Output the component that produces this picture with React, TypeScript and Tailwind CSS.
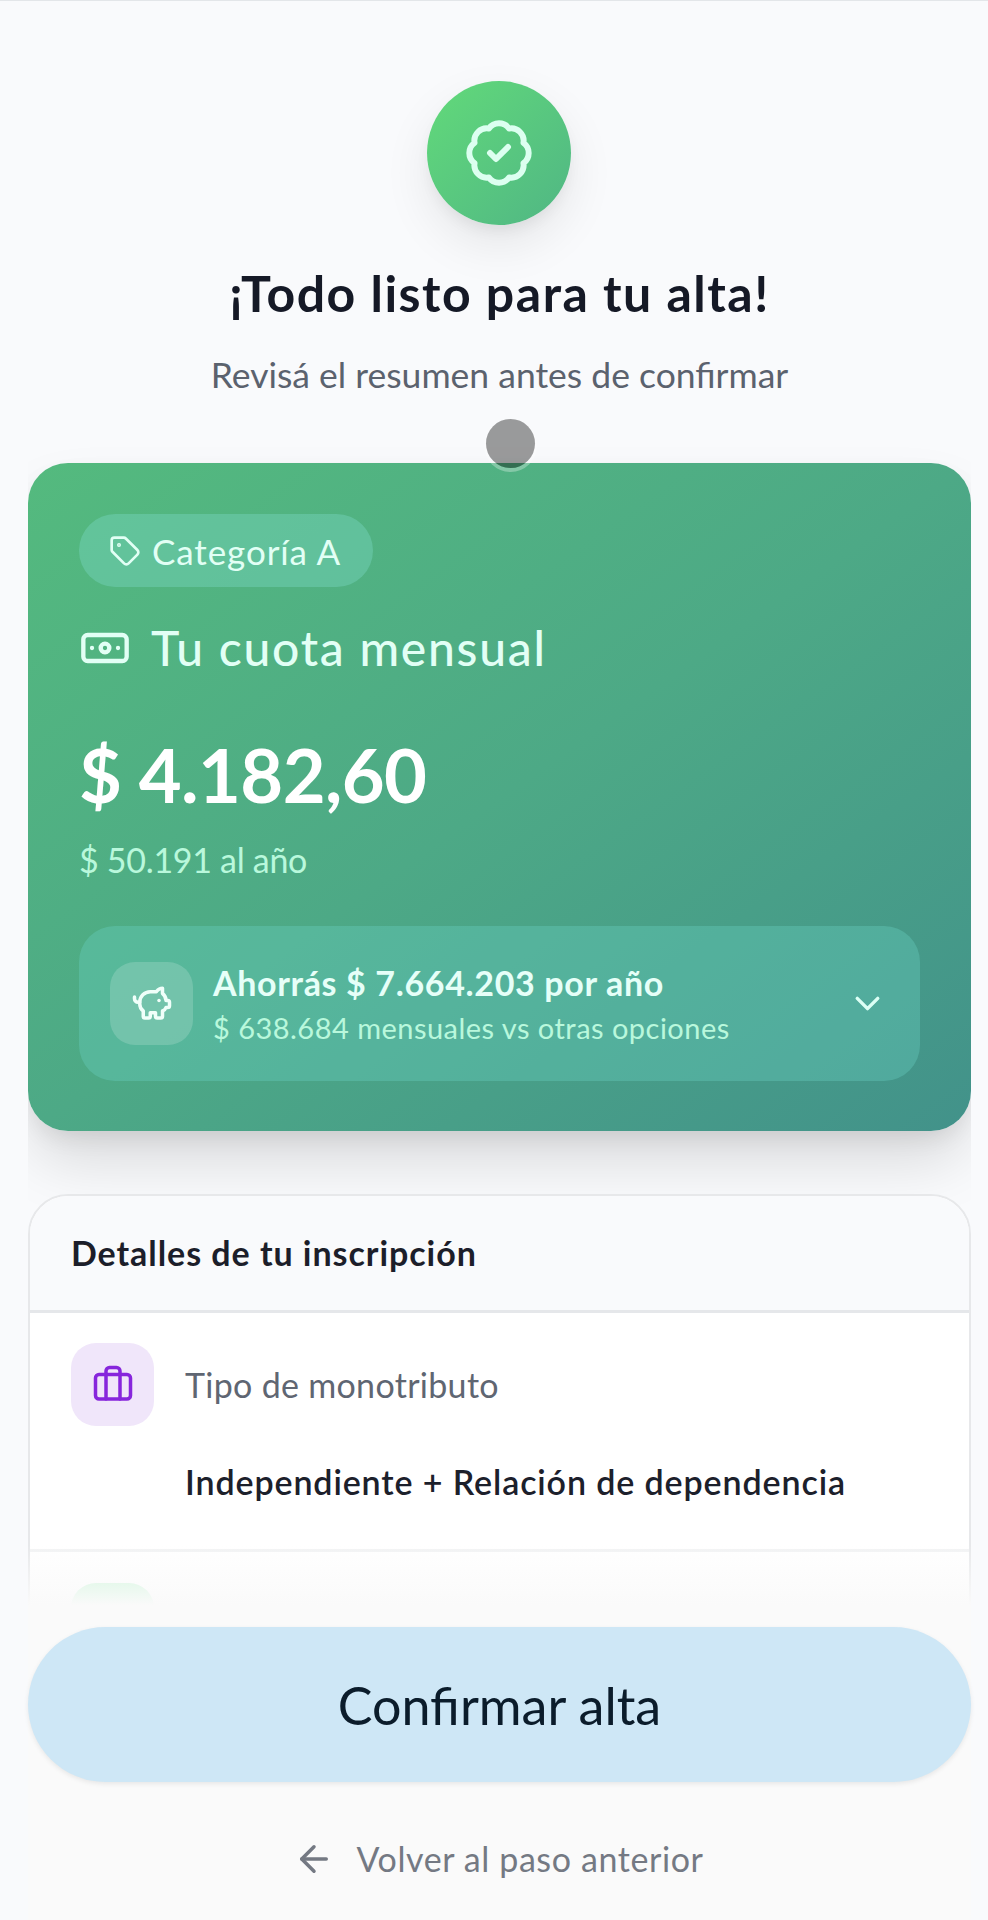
import React from 'react';
import { ArrowLeft, Banknote, Briefcase, ChevronDown, PiggyBank, Tag } from 'lucide-react';

const SUMMARY = {
  category: 'Categoría A',
  monthly: '$ 4.182,60',
  yearly: '$ 50.191 al año',
  savings: 'Ahorrás $ 7.664.203 por año',
  savingsDetail: '$ 638.684 mensuales vs otras opciones',
};

const SealCheck: React.FC = () => (
  <svg
    viewBox="0 0 24 24"
    className="size-[72px] text-[#dcfff0]"
    fill="none"
    stroke="currentColor"
    strokeWidth={2}
    strokeLinecap="round"
    strokeLinejoin="round"
  >
    <path
      transform="translate(-1.2 -1.2) scale(1.1)"
      strokeWidth={1.8}
      d="M21 12c0 1.268-.63 2.39-1.593 3.068a3.745 3.745 0 0 1-1.043 3.296 3.745 3.745 0 0 1-3.296 1.043A3.745 3.745 0 0 1 12 21c-1.268 0-2.39-.63-3.068-1.593a3.746 3.746 0 0 1-3.296-1.043 3.745 3.745 0 0 1-1.043-3.296A3.745 3.745 0 0 1 3 12c0-1.268.63-2.39 1.593-3.068a3.745 3.745 0 0 1 1.043-3.296 3.746 3.746 0 0 1 3.296-1.043A3.746 3.746 0 0 1 12 3c1.268 0 2.39.63 3.068 1.593a3.746 3.746 0 0 1 3.296 1.043 3.746 3.746 0 0 1 1.043 3.296A3.745 3.745 0 0 1 21 12Z"
    />
    <path d="m9 12 2 2 4-4" />
  </svg>
);

const Header: React.FC = () => (
  <header className="flex flex-col items-center pt-[80px]">
    <div className="mr-px flex size-[144px] items-center justify-center rounded-full bg-linear-to-br from-[#62da79] to-[#50b684] shadow-[0_20px_50px_-2px_rgba(0,0,0,0.09),0_8px_16px_-4px_rgba(0,0,0,0.07)]">
      <SealCheck />
    </div>
    <h1 className="mt-[38px] text-[50px] leading-[60px] font-bold tracking-[1.5px] whitespace-nowrap text-[#151926]">
      ¡Todo listo para tu alta!
    </h1>
    <p className="mt-[30px] text-[35.5px] leading-[44px] whitespace-nowrap text-[#5b626e]">
      Revisá el resumen antes de confirmar
    </p>
  </header>
);

const FeeCard: React.FC = () => (
  <section className="relative mt-[66px] rounded-[40px] bg-linear-to-br from-[#54ba7e] via-[#4da986] to-[#42928a] px-[51px] pt-[51px] pb-[50px] shadow-[0_34px_60px_-4px_rgba(0,0,0,0.13),0_10px_24px_-6px_rgba(0,0,0,0.1)]">
    <div className="flex h-[73px] w-[294px] items-center gap-[11px] rounded-full bg-[#7bd8c4]/40 pl-[30px] text-[#e2fff5]">
      <Tag size={32} strokeWidth={2} className="shrink-0" />
      <span className="text-[35px] leading-[44px] tracking-[0.9px] whitespace-nowrap">{SUMMARY.category}</span>
    </div>

    <div className="mt-[31px] flex items-center gap-[20px] text-[#e2fff5]">
      <Banknote size={52} strokeWidth={2} className="shrink-0" />
      <h2 className="text-[48px] leading-[60px] font-medium tracking-[1.75px] whitespace-nowrap">Tu cuota mensual</h2>
    </div>

    <p className="mt-[53px] text-[74px] leading-[88px] font-bold tracking-[-0.6px] whitespace-nowrap text-white">
      {SUMMARY.monthly}
    </p>
    <p className="mt-[19px] text-[34px] leading-[44px] tracking-[-0.3px] whitespace-nowrap text-[#b9f8dc]">
      {SUMMARY.yearly}
    </p>

    <button className="mt-[44px] flex h-[155px] w-full items-center rounded-[36px] bg-[#6ad0c4]/35 px-[31px] text-left">
      <span className="flex size-[83px] shrink-0 items-center justify-center rounded-[25px] bg-white/17">
        <PiggyBank size={42} strokeWidth={2} className="text-[#f0fffa]" />
      </span>
      <span className="ml-[20px] flex flex-1 flex-col pt-[2px]">
        <span className="text-[34px] leading-[46px] font-bold tracking-[0.65px] whitespace-nowrap text-[#e6fff8]">
          {SUMMARY.savings}
        </span>
        <span className="text-[29px] leading-[44px] tracking-[0.47px] whitespace-nowrap text-[#b9f8dc]">
          {SUMMARY.savingsDetail}
        </span>
      </span>
      <ChevronDown size={41} strokeWidth={2} className="mr-px shrink-0 text-[#dcfff5]" />
    </button>
  </section>
);

const Details: React.FC = () => (
  <section className="relative mt-[63px] h-[500px] overflow-hidden rounded-t-[40px] border-2 border-[#e7e8ea] bg-white">
    <div className="h-[117px] border-b-[3px] border-[#e5e7ea] bg-[#f9fafc] px-[41px] pt-[35px]">
      <h3 className="text-[34px] leading-[44px] font-bold tracking-[0.95px] whitespace-nowrap text-[#1c1e2a]">
        Detalles de tu inscripción
      </h3>
    </div>
    <div className="h-[239px] border-b-[3px] border-[#f2f3f4] px-[41px] pt-[30px]">
      <div className="flex items-center gap-[31px]">
        <span className="flex size-[83px] items-center justify-center rounded-[25px] bg-[#f0e6fa]">
          <Briefcase size={42} strokeWidth={2} className="text-[#8726dc]" />
        </span>
        <span className="text-[34px] leading-[44px] tracking-[0.3px] whitespace-nowrap text-[#5f6672]">
          Tipo de monotributo
        </span>
      </div>
      <p className="mt-[34px] ml-[114px] text-[34px] leading-[44px] font-semibold tracking-[0.88px] whitespace-nowrap text-[#1c202b]">
        Independiente + Relación de dependencia
      </p>
    </div>
    <div className="px-[41px] pt-[31px]">
      <span className="block size-[83px] rounded-[25px] bg-[#c4f5d3]" />
    </div>
  </section>
);

const Footer: React.FC = () => (
  <footer className="relative flex h-[315px] shrink-0 flex-col items-center bg-[#fafafa] pt-[22px]">
    {/* content fades out above the sticky actions */}
    <div className="absolute bottom-full left-0 h-[60px] w-full bg-linear-to-t from-[#fafafa] to-[#fafafa]/0" />
    <button className="h-[155px] w-full rounded-full bg-[#cee7f6] text-[52px] leading-[60px] text-[#0b1c2b] shadow-[0_2px_5px_rgba(0,0,0,0.08)]">
      Confirmar alta
    </button>
    <button className="mt-[55px] mr-[2px] flex items-center gap-[21px] text-[#747983]">
      <ArrowLeft size={42} strokeWidth={2} />
      <span className="text-[34px] leading-[44px] tracking-[0.6px] whitespace-nowrap">Volver al paso anterior</span>
    </button>
  </footer>
);

const App: React.FC = () => {
  return (
    <div className="h-[1920px] w-full overflow-hidden border-t border-[#e3e6e9] bg-[#f9fafc] pr-[17px] pl-[28px] font-['Lato','Open_Sans',sans-serif]">
      <div className="relative flex h-full flex-col">
        <main className="h-[1604px] shrink-0 overflow-x-clip overflow-y-hidden">
          <Header />
          <FeeCard />
          <Details />
        </main>
        <Footer />
        {/* touch pointer */}
        <span className="absolute top-[418px] left-[458px] size-[49px] rounded-full bg-[#0a0a0a]/40 shadow-[0_2px_0_2px_rgba(255,255,255,0.3)]" />
      </div>
    </div>
  );
};

export default App;
